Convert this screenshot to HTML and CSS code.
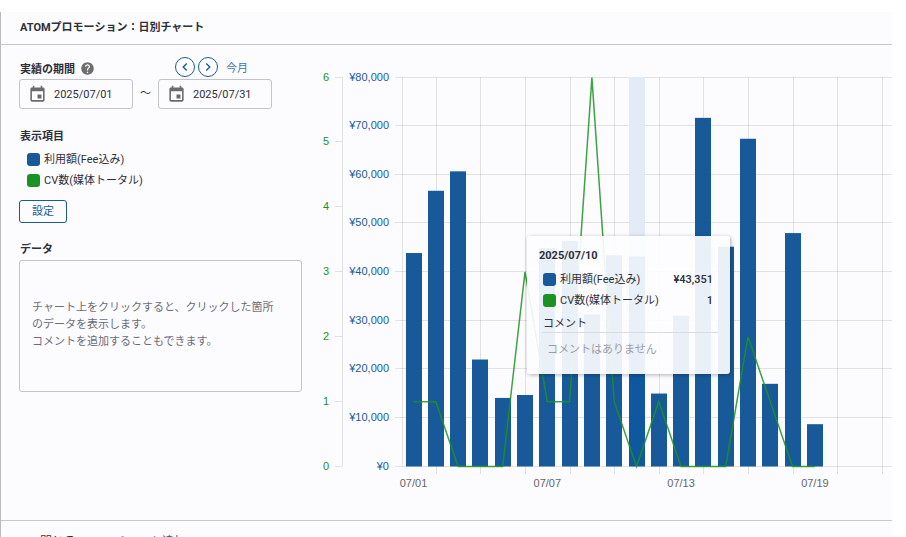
FILE: index.html
```html
<!DOCTYPE html>
<html lang="ja">
<head>
  <meta charset="utf-8">
  <title>日別チャート</title>
  <link rel="stylesheet" href="styles.css">
</head>
<body>
  <main class="panel">
    <header class="panel-header">
      <h1>ATOMプロモーション：日別チャート</h1>
    </header>

    <div class="panel-body">
      <section class="side">
        <div class="period-head">
          <h2>実績の期間</h2>
          <svg class="help" viewBox="0 0 24 24" aria-hidden="true">
            <path d="M12 2C6.48 2 2 6.48 2 12s4.48 10 10 10 10-4.48 10-10S17.52 2 12 2zm1 17h-2v-2h2v2zm2.07-7.75l-.9.92C13.45 12.9 13 13.5 13 15h-2v-.5c0-1.1.45-2.1 1.17-2.83l1.24-1.26c.37-.36.59-.86.59-1.41 0-1.1-.9-2-2-2s-2 .9-2 2H8c0-2.21 1.79-4 4-4s4 1.79 4 4c0 .88-.36 1.68-.93 2.25z"/>
          </svg>
          <div class="period-nav">
            <button type="button" class="round" aria-label="前へ"><svg viewBox="0 0 24 24"><path d="M15 6l-6 6 6 6"/></svg></button>
            <button type="button" class="round" aria-label="次へ"><svg viewBox="0 0 24 24"><path d="M9 6l6 6-6 6"/></svg></button>
            <a href="#">今月</a>
          </div>
        </div>

        <div class="period">
          <label class="date">
            <svg viewBox="0 0 24 24" aria-hidden="true"><path d="M17 12h-5v5h5v-5zM16 1v2H8V1H6v2H5c-1.11 0-2 .9-2 2v14c0 1.1.89 2 2 2h14c1.1 0 2-.9 2-2V5c0-1.1-.9-2-2-2h-1V1h-2zm3 18H5V8h14v11z"/></svg>
            <input type="text" aria-label="開始日" value="2025/07/01">
          </label>
          <span class="tilde">～</span>
          <label class="date">
            <svg viewBox="0 0 24 24" aria-hidden="true"><path d="M17 12h-5v5h5v-5zM16 1v2H8V1H6v2H5c-1.11 0-2 .9-2 2v14c0 1.1.89 2 2 2h14c1.1 0 2-.9 2-2V5c0-1.1-.9-2-2-2h-1V1h-2zm3 18H5V8h14v11z"/></svg>
            <input type="text" aria-label="終了日" value="2025/07/31">
          </label>
        </div>

        <h2>表示項目</h2>
        <ul class="legend">
          <li><span class="swatch blue"></span>利用額(Fee込み)</li>
          <li><span class="swatch green"></span>CV数(媒体トータル)</li>
        </ul>
        <button type="button" class="setting">設定</button>

        <h2>データ</h2>
        <div class="data-box">
          <p>チャート上をクリックすると、クリックした箇所のデータを表示します。<br>コメントを追加することもできます。</p>
        </div>
      </section>

      <section class="chart">
        <svg id="chart" viewBox="0 0 572 440" role="img" aria-label="日別チャート"></svg>
        <div class="tooltip">
          <strong>2025/07/10</strong>
          <ul class="legend">
            <li><span class="swatch blue"></span>利用額(Fee込み)<b>¥43,351</b></li>
            <li><span class="swatch green"></span>CV数(媒体トータル)<b>1</b></li>
          </ul>
          <div class="comment-title">コメント</div>
          <p class="comment">コメントはありません</p>
        </div>
      </section>
    </div>

    <footer class="panel-footer">
      <button type="button" class="close">閉じる</button>
      <a href="#">チャート追加</a>
    </footer>
  </main>

  <script src="chart.js"></script>
</body>
</html>
```

FILE: styles.css
```css
* {
  box-sizing: border-box;
}

body {
  margin: 0;
  height: 100vh;
  overflow: hidden;
  background: #fff;
  color: #2d2f3a;
  font-family: Roboto, "Noto Sans CJK JP", sans-serif;
  font-size: 11px;
  line-height: 17px;
}

h1,
h2,
p,
ul {
  margin: 0;
  padding: 0;
}

h1,
h2 {
  font-size: 11px;
  font-weight: bold;
}

a {
  color: #1a5a99;
  text-decoration: none;
}

button,
input {
  font: inherit;
  color: inherit;
}

.panel {
  margin: 12px 14px 0 0;
  background: #fcfcff;
  border-left: 1px solid #bbb;
}

.panel-header {
  padding: 7px 19px 8px;
  border-bottom: 1px solid #c8c8cc;
}

.panel-body {
  display: flex;
  align-items: flex-start;
  min-height: 475px;
  padding-top: 12px;
}

/* Left column */
.side {
  flex: none;
  width: 319px;
  padding-left: 18px;
}

.side h2 {
  padding-left: 1px;
}

.period-head {
  display: flex;
  align-items: center;
  width: 253px;
  height: 22px;
}

.period-head h2 {
  padding-top: 2px;
}

.help {
  width: 15px;
  height: 15px;
  margin: 1px 0 0 5px;
  fill: #6e6e6e;
}

.period-nav {
  display: flex;
  align-items: center;
  gap: 3px;
  margin: 0 24px 3px auto;
}

.period-nav a {
  margin: 3px 0 0 5px;
  color: #3f76ae;
}

.round {
  display: flex;
  align-items: center;
  justify-content: center;
  width: 20px;
  height: 20px;
  padding: 0;
  background: #fcfcff;
  border: 1px solid #1a5a99;
  border-radius: 50%;
}

.round svg {
  width: 14px;
  height: 14px;
  fill: none;
  stroke: #1a5a99;
  stroke-width: 2.4;
}

.period {
  display: flex;
  width: 253px;
  margin-bottom: 19px;
}

.date {
  display: flex;
  align-items: center;
  gap: 7px;
  width: 114px;
  height: 30px;
  padding-left: 8px;
  border: 1px solid #c4c4c8;
  border-radius: 3px;
}

.date svg {
  flex: none;
  width: 19px;
  height: 19px;
  fill: #6b6b6b;
}

.date input {
  width: 72px;
  padding: 0;
  background: none;
  border: 0;
  outline: 0;
}

.tilde {
  flex: 1;
  line-height: 30px;
  text-align: center;
}

.legend {
  list-style: none;
}

.side .legend {
  margin: 4px 0 9px 8px;
}

.legend li {
  display: flex;
  align-items: center;
  height: 21px;
}

.legend b {
  margin-left: auto;
  font-weight: 500;
}

.swatch {
  width: 13px;
  height: 13px;
  margin-right: 4px;
  border-radius: 3px;
}

.blue {
  background: #185a99;
}

.green {
  background: #1b9322;
}

.setting {
  display: block;
  width: 48px;
  height: 23px;
  margin-bottom: 18px;
  padding: 0;
  background: #fcfcff;
  border: 1px solid #1a5a99;
  border-radius: 3px;
  color: #1a5a99;
}

.data-box {
  display: flex;
  align-items: center;
  width: 283px;
  height: 132px;
  margin-top: 2px;
  padding: 0 20px 4px 12px;
  border: 1px solid #c4c4c8;
  border-radius: 3px;
  color: #6a6c7a;
}

/* Chart */
.chart {
  position: relative;
  flex: 1;
  margin-top: 3px;
}

.chart > svg {
  display: block;
  width: 100%;
  font-family: "Liberation Sans", Arial, sans-serif;
  font-size: 11px;
}

.grid {
  stroke: #000;
  stroke-opacity: 0.1;
}

.bar {
  fill: #185a99;
}

.bar-active {
  fill: #0f58a0;
}

.hover-band {
  fill: #e3ebf7;
}

.line {
  fill: none;
  stroke: #1b9322;
  stroke-opacity: 0.85;
  stroke-width: 1.5;
}

.label-yen {
  fill: #1a5a99;
  text-anchor: end;
}

.label-cv {
  fill: #1b9322;
  text-anchor: end;
}

.label-day {
  fill: #666;
  text-anchor: middle;
}

.tooltip {
  position: absolute;
  top: 176px;
  left: 207px;
  width: 203px;
  height: 138px;
  padding: 11px 12px;
  background: rgba(253, 253, 255, 0.92);
  border-radius: 3px;
  box-shadow: 1px 1px 4px rgba(0, 0, 0, 0.3);
}

.tooltip strong {
  display: block;
}

.tooltip .legend {
  padding: 5px 5px 4px 4px;
}

.comment-title {
  margin-left: 3px;
  padding-left: 1px;
  border-bottom: 1px solid #dcdce0;
}

.comment {
  padding: 8px 8px 0;
  color: #9a9ca6;
}

/* Footer */
.panel-footer {
  display: flex;
  gap: 38px;
  padding: 13px 39px;
  border-top: 1px solid #c8c8cc;
  font-size: 12px;
}

.close {
  padding: 0;
  background: none;
  border: 0;
}
```

FILE: chart.js
```js
var fee = [43800, 56600, 60600, 21900, 14000, 14600, 44800, 46300, 31200, 43351,
  43100, 14900, 30900, 71600, 45100, 67300, 16900, 47900, 8600];
var cv = [1, 1, 0, 0, 0, 3, 1, 1, 6, 1, 0, 1, 0, 0, 0, 2, 1, 0, 0];

var chart = document.getElementById("chart");
var top0 = 17;
var bottom = 406;
var left = 82;
var right = 572;
var step = 22.3;
var hovered = 10;

function add(name, attrs, text) {
  var el = document.createElementNS("http://www.w3.org/2000/svg", name);
  for (var key in attrs) {
    el.setAttribute(key, attrs[key]);
  }
  if (text !== undefined) {
    el.textContent = text;
  }
  chart.appendChild(el);
}

function gridLine(x1, y1, x2, y2) {
  add("line", { class: "grid", x1: x1, y1: y1, x2: x2, y2: y2 });
}

function dayX(i) {
  return 93.5 + i * step;
}

function yFor(value, max) {
  return bottom - (bottom - top0) * value / max;
}

// yen axis
for (var yen = 0; yen <= 80000; yen += 10000) {
  var y = Math.floor(yFor(yen, 80000));
  gridLine(75, y + 0.5, right, y + 0.5);
  add("text", { class: "label-yen", x: 69, y: y + 4 }, "¥" + yen.toLocaleString("en-US"));
}

// conversion axis
gridLine(22.5, top0, 22.5, bottom);
for (var n = 0; n <= 6; n++) {
  var ny = Math.floor(yFor(n, 6));
  gridLine(15, ny + 0.5, 22, ny + 0.5);
  add("text", { class: "label-cv", x: 9, y: ny + 4 }, n);
}

// vertical grid, every second day
gridLine(left + 0.5, top0, left + 0.5, bottom);
for (var d = 1; d < 22; d += 2) {
  var gx = Math.round(dayX(d)) + 0.5;
  gridLine(gx, top0, gx, bottom + 8);
}

for (var i = 0; i < fee.length; i++) {
  var x = Math.round(dayX(i)) - 8;
  var barY = yFor(fee[i], 80000);
  if (i === hovered) {
    add("rect", { class: "hover-band", x: x, y: top0, width: 16, height: bottom - top0 });
  }
  add("rect", {
    class: i === hovered ? "bar bar-active" : "bar",
    x: x, y: barY, width: 16, height: bottom + 0.5 - barY
  });
  if (i % 6 === 0) {
    add("text", { class: "label-day", x: dayX(i), y: bottom + 21 }, "07/" + String(i + 1).padStart(2, "0"));
  }
}

add("polyline", {
  class: "line",
  points: cv.map(function (value, i) {
    return dayX(i) + "," + (yFor(value, 6) + 0.5);
  }).join(" ")
});
```
